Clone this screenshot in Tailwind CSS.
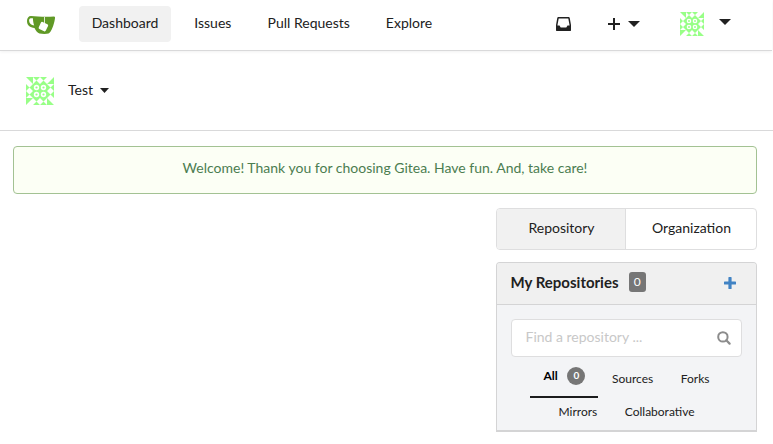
<!DOCTYPE html>
<html lang="en">
<head>
<meta charset="utf-8">
<title>Dashboard - Gitea</title>
<script src="https://cdn.jsdelivr.net/npm/@tailwindcss/browser@4"></script>
</head>
<body class="h-[444px] overflow-hidden bg-white font-[Lato,sans-serif] text-[14px] leading-5 text-[#212121]">
<svg class="hidden">
  <symbol id="avatar" viewBox="0 0 28 28">
    <g fill="#98ff87">
      <path d="M0 0h7v7zM28 0v7h-7zM28 28h-7v-7zM0 28v-7h7z"/>
      <path d="M7 0h7L7 7h7zM14 0h7l-7 7h7zM7 21h7l-7 7h7zM14 21h7l-7 7h7zM0 7v7l7-7v7zM0 14v7l7-7v7zM21 7v7l7-7v7zM21 14v7l7-7v7z"/>
      <path d="M7 7h14v14H7z"/>
    </g>
    <g fill="#98ff87" stroke="#fff" stroke-width="1.600">
      <circle cx="10.500" cy="10.500" r="1.900"/><circle cx="17.500" cy="10.500" r="1.900"/>
      <circle cx="10.500" cy="17.500" r="1.900"/><circle cx="17.500" cy="17.500" r="1.900"/>
    </g>
  </symbol>
</svg>

<nav class="flex h-[51px] w-[772px] items-start border-b border-[#d9d9da] pl-[27px] pt-[6px] shadow-[0_1px_3px_rgba(0,0,0,0.06)]">
  <svg class="mt-[10px] h-[18px] w-[28px]" viewBox="0 0 28 18">
    <path fill="#609926" fill-rule="evenodd" d="M4 0C1.500 0 0 2 0 5c0 4.500 3 6.500 7.500 7 1 2.500 3 5 5 5.500 3 .5 7 .5 9 0 3-1.500 5.500-9 6.300-14C28.300 1 28 .5 27 .5 18 1 10 .5 4 0zM3.700 2.300h2.200c.1 3 .6 5.200 1.300 7.200C4.200 8.900 2.200 7.500 2.100 4.700c0-1.400.6-2.200 1.600-2.400z"/>
    <rect x="12.500" y="6.700" width="7.800" height="7.800" rx="1.300" transform="rotate(25 16.400 10.600)" fill="#fff"/>
    <path d="M17.500 1v6" stroke="#fff" stroke-width=".8"/>
  </svg>
  <div class="ml-[24px] flex h-9 items-center leading-5">
    <a class="flex h-9 w-[92px] items-center justify-center rounded bg-[#f1f1f1] pb-[2px]">Dashboard</a>
    <a class="ml-[10.250px] px-[13px] pb-[2px]">Issues</a>
    <a class="ml-[10.250px] px-[13px] pb-[2px]">Pull Requests</a>
    <a class="ml-[10px] px-[13px] pb-[2px]">Explore</a>
  </div>
  <div class="ml-auto mr-[41px] flex">
    <svg class="mt-[11px] h-[14px] w-[15px]" viewBox="0 0 15 14"><path fill="#212121" fill-rule="evenodd" d="M2 0h11l.7.700L15 8v5.500l-.5.500H.5L0 13.500V8L1.300.7zM2.700 1.400L1.400 8.500H3.500L4.700 10.500h5.600l1.200-2h2.100L12.300 1.400z"/></svg>
    <svg class="ml-[37px] mt-[12px] h-[12px] w-[12px]" viewBox="0 0 12 12"><path fill="#212121" d="M5 0h2v5h5v2H7v5H5V7H0V5h5z"/></svg>
    <svg class="ml-[8px] mt-[15px] h-[6px] w-[12px]" viewBox="0 0 12 6"><path fill="#212121" d="M0 0h12L6 6z"/></svg>
    <svg class="ml-[40px] mt-[6px] size-6"><use href="#avatar"/></svg>
    <svg class="ml-[15px] mt-[13px] h-[6px] w-[12px]" viewBox="0 0 12 6"><path fill="#212121" d="M0 0h12L6 6z"/></svg>
  </div>
</nav>

<header class="flex h-[80px] items-center border-b border-[#d9d9da] pl-[26px]">
  <svg class="mt-[1px] size-7"><use href="#avatar"/></svg>
  <span class="ml-[14px] pb-[2px]">Test</span>
  <svg class="ml-[6.500px] h-[5px] w-[9px]" viewBox="0 0 10 5" preserveAspectRatio="none"><path fill="#212121" d="M0 0h10L5 5z"/></svg>
</header>

<main class="pl-[13px] pr-[16px] pt-[15px]">
  <div class="flex h-[48px] items-center justify-center rounded border border-[#a3c293] bg-[#fcfff5] pb-[4px] text-[#4b7d50]">Welcome! Thank you for choosing Gitea. Have fun. And, take care!</div>

  <section class="ml-auto mt-[14px] w-[261px]">
    <div class="flex h-[42px] overflow-hidden rounded border border-[#dededf]">
      <a class="flex w-[129px] items-center justify-center border-r border-[#dededf] bg-[#f1f1f1] pb-[2px] pl-[1px]">Repository</a>
      <a class="flex flex-1 items-center justify-center pb-[2px] pl-[1px]">Organization</a>
    </div>

    <div class="mt-[12px] h-[170px] overflow-hidden rounded-t border border-b-2 border-[#d4d4d5] bg-[#f3f4f6]">
      <h4 class="flex h-[42px] items-center border-b border-[#d4d4d5] bg-[#f0f0f0] pb-[2px] pl-[13.500px] pr-[20px] text-[15px] font-bold">
        <span class="-mt-px">My Repositories</span>
        <span class="ml-[10px] mb-[1px] flex h-5 w-[17px] items-center justify-center rounded-[3px] bg-[#767676] pl-[0.500px] text-[12px] font-normal text-white">0</span>
        <svg class="ml-auto h-[12px] w-[12px]" viewBox="0 0 12 12"><path fill="#4183c4" d="M5 0h2q.6 0 .6.600V4.400h3.800q.6 0 .6.600v2q0 .6-.6.600H7.600v3.800q0 .6-.6.600H5q-.6 0-.6-.6V7.600H.6Q0 7.600 0 7V5q0-.6.600-.6h3.800V.6Q4.400 0 5 0z"/></svg>
      </h4>
      <div class="mx-[14px] mt-[14px] flex h-[38px] items-center justify-between rounded border border-[#dededf] bg-white pl-[13.500px] pr-[10px]">
        <span class="pb-[2px] text-[#c8c8c8]">Find a repository ...</span>
        <svg class="size-[14px]" viewBox="0 0 14 14" fill="none" stroke="#8c8c8c" stroke-width="2"><circle cx="5.900" cy="5.900" r="4.700"/><path d="M9.300 9.300l3.300 3.300" stroke-width="2.200" stroke-linecap="round"/></svg>
      </div>
      <div class="flex text-[12px] leading-4 text-[#212121]">
        <a class="ml-[33px] flex h-[41px] w-[68px] items-start border-b-2 border-[#1b1c1d] pl-[13.500px] pt-[10px] font-bold text-black"><span class="pt-[1px]">All</span><span class="ml-[9.500px] flex size-[18px] items-center justify-center rounded-full bg-[#767676] pb-[2px] text-[10px] leading-[10px] text-white">0</span></a>
        <a class="ml-[14px] mt-[14px]">Sources</a>
        <a class="ml-[27.500px] mt-[14px]">Forks</a>
      </div>
      <div class="mt-[6px] flex pl-[61.500px] text-[12px] leading-4">
        <a>Mirrors</a>
        <a class="ml-[27.500px]">Collaborative</a>
      </div>
    </div>
  </section>
</main>
</body>
</html>
